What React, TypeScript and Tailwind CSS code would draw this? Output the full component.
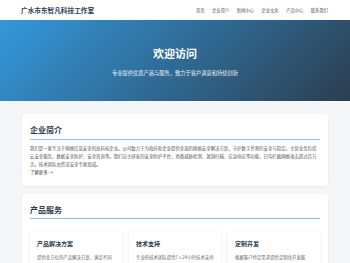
const navItems = ["首页", "企业简介", "新闻中心", "企业文化", "产品中心", "联系我们"];

const services = [
  { title: "产品解决方案", desc: "提供全方位的产品解决方案，满足不同行业客户的需求。" },
  { title: "技术支持", desc: "专业的技术团队提供7×24小时技术支持服务。" },
  { title: "定制开发", desc: "根据客户特定需求提供定制化开发服务。" },
];

export default function App() {
  return (
    <div className="min-h-screen bg-[#f5f6f7] font-['Noto_Sans_CJK_SC','Noto_Sans',sans-serif] text-[#333]">
      {/* Header */}
      <header className="h-[20px] bg-white shadow-[0_1px_2px_rgba(0,0,0,0.08)] flex items-center justify-between pl-[21px] pr-[22px]">
        <span className="text-[6.65px] leading-none font-bold text-[#2c3e50]">广水市东智凡科技工作室</span>
        <nav className="flex gap-[7.5px] text-[4.3px] leading-none text-[#555]">
          {navItems.map((item) => (
            <span key={item}>{item}</span>
          ))}
        </nav>
      </header>

      {/* Hero */}
      <section className="h-[81px] bg-[linear-gradient(135deg,#3498db,#2c3e50)] flex flex-col items-center pt-[27px] text-white">
        <h1 className="text-[11px] leading-[13px] font-bold">欢迎访问</h1>
        <p className="mt-[8.5px] text-[5.25px] leading-[8px] text-white/90">专业提供优质产品与服务，致力于客户满意和持续创新</p>
      </section>

      <main className="px-[22px] pt-[13px] flex flex-col gap-[8px]">
        {/* About */}
        <section className="bg-white rounded-[3px] shadow-[0_1px_3px_rgba(0,0,0,0.06)] px-[8px] pt-[11px] pb-[9px]">
          <h2 className="text-[8px] leading-[10px] font-bold text-[#2c3e50] pb-[3.5px] border-b-[1.5px] border-[#85c1e9]">企业简介</h2>
          <p className="mt-[4px] text-[4.43px] leading-[8.3px] text-[#555]">
            我们是一家专注于网络信息安全的高科技企业。公司致力于为政府和企业提供全面的网络安全解决方案，守护数字世界的安全与稳定。主营业务包括云安全服务、数据安全防护、安全咨询等。我们自主研发的安全防护平台，具备威胁检测、漏洞扫描、应急响应等功能，日均拦截网络攻击超过百万次。技术团队由资深安全专家组成。
          </p>
          <p className="text-[4.43px] leading-[8.3px] text-[#444]">了解更多 →</p>
        </section>

        {/* Services */}
        <section className="bg-white rounded-[3px] shadow-[0_1px_3px_rgba(0,0,0,0.06)] px-[8px] pt-[11px] pb-[9px]">
          <h2 className="text-[8px] leading-[10px] font-bold text-[#2c3e50] pb-[3.5px] border-b-[1.5px] border-[#85c1e9]">产品服务</h2>
          <div className="mt-[12px] grid grid-cols-3 gap-[7px]">
            {services.map((s) => (
              <div key={s.title} className="bg-white rounded-[3px] shadow-[0_1px_4px_rgba(0,0,0,0.08)] px-[7px] pt-[9px] pb-[8px]">
                <h3 className="text-[6px] leading-[7.5px] font-bold text-[#2c3e50]">{s.title}</h3>
                <p className="mt-[5px] text-[4.4px] leading-[8px] text-[#666]">{s.desc}</p>
              </div>
            ))}
          </div>
        </section>
      </main>
    </div>
  );
}
